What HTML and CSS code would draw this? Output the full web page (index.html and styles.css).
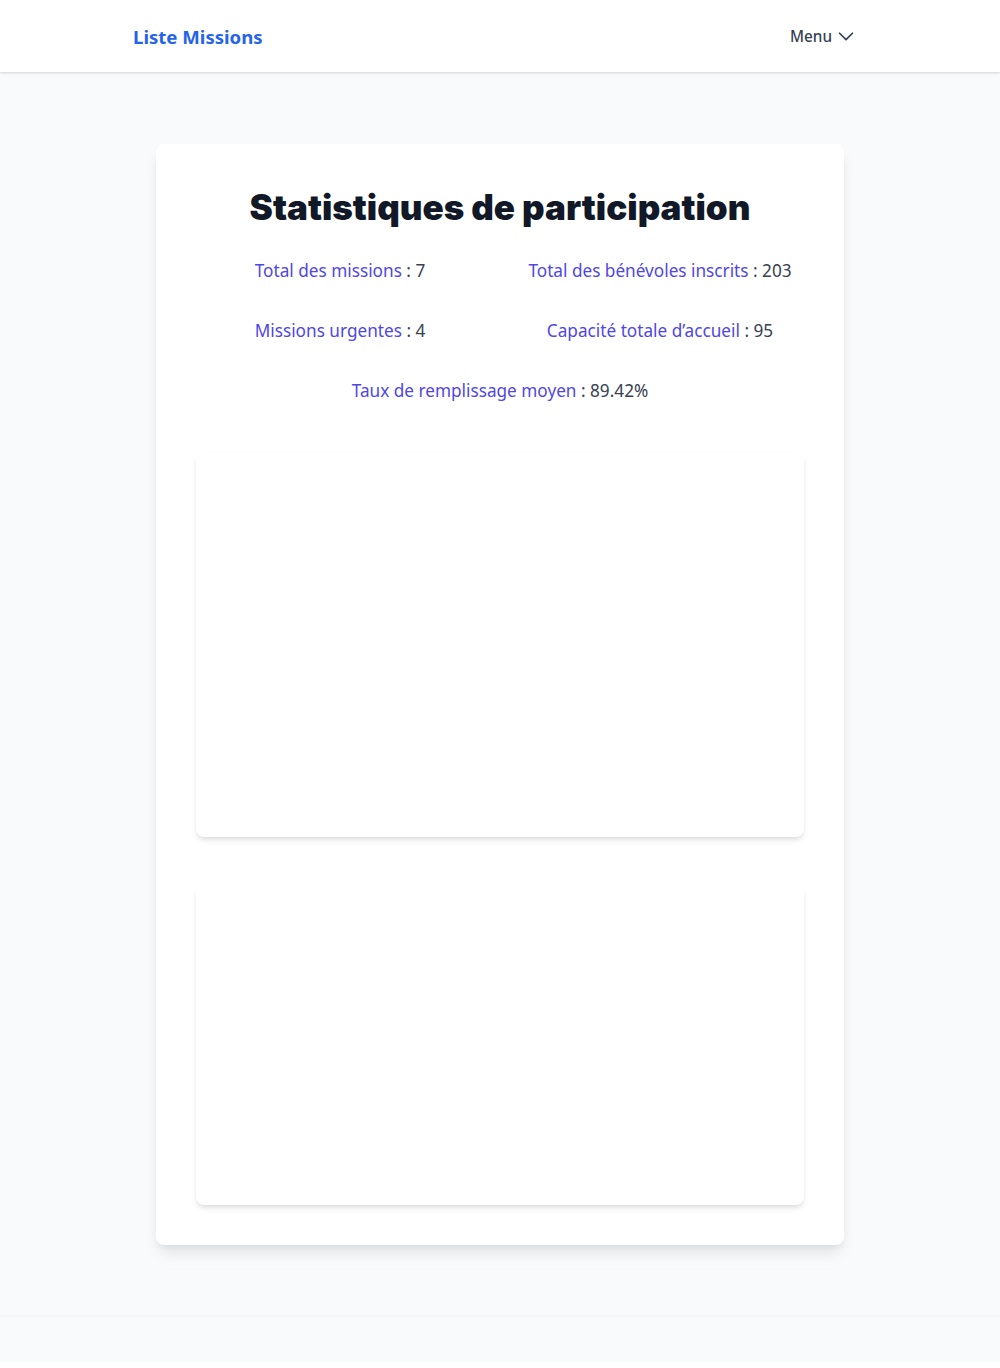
FILE: index.html
```html
<!DOCTYPE html>
<html lang="fr">
<head>
<meta charset="utf-8">
<title>Statistiques</title>
<link rel="stylesheet" href="styles.css">
</head>
<body>
<div class="page">
  <header class="topbar">
    <div class="topbar-inner">
      <a class="brand" href="#">Liste Missions</a>
      <button class="menu-btn">Menu
        <svg class="chev" width="22" height="22" viewBox="0 0 24 24" fill="none" stroke="currentColor" stroke-width="1.9" stroke-linecap="round" stroke-linejoin="round"><path d="M19 9l-7 7-7-7"/></svg>
      </button>
    </div>
  </header>
  <main class="main">
    <section class="card">
      <h1 class="title">Statistiques de participation</h1>
      <div class="stats">
        <p class="stat"><span class="label">Total des missions</span> : 7</p>
        <p class="stat"><span class="label">Total des bénévoles inscrits</span> : 203</p>
        <p class="stat"><span class="label">Missions urgentes</span> : 4</p>
        <p class="stat"><span class="label">Capacité totale d’accueil</span> : 95</p>
        <p class="stat wide"><span class="label">Taux de remplissage moyen</span> : 89.42%</p>
      </div>
      <div class="chart chart-a"></div>
      <div class="chart chart-b"></div>
    </section>
  </main>
  <footer class="footer"></footer>
</div>
</body>
</html>
```
FILE: styles.css
```css
* { box-sizing: border-box; }
html, body { margin: 0; padding: 0; background: #fff; }
body {
  font-family: "Noto Sans", "Open Sans", sans-serif;
  color: #374151;
}
.page {
  background: #f9fafb;
}
.topbar {
  background: #fff;
  height: 72px;
  box-shadow: 0 1px 3px rgba(0,0,0,0.1), 0 1px 2px rgba(0,0,0,0.06);
  position: relative;
}
.topbar-inner {
  height: 72px;
  padding: 0 143px 0 133px;
  display: flex;
  align-items: center;
  justify-content: space-between;
}
.brand {
  color: #2563eb;
  font-weight: 700;
  font-size: 18.6px;
  text-decoration: none;
}
.menu-btn {
  background: none;
  border: 0;
  padding: 0;
  display: flex;
  align-items: center;
  gap: 3px;
  font-family: inherit;
  font-size: 15.3px;
  font-weight: 500;
  color: #374151;
}
.main {
  padding: 72px 0 72px;
}
.card {
  width: 688px;
  margin: 0 auto;
  background: #fff;
  border-radius: 8px;
  padding: 40px;
  box-shadow: 0 10px 15px -3px rgba(0,0,0,0.1), 0 4px 6px -2px rgba(0,0,0,0.05);
}
.title {
  margin: 3px 0 0;
  text-align: center;
  font-family: "Inter", sans-serif;
  font-weight: 900;
  font-size: 35px;
  line-height: 40px;
  color: #111827;
}
.stats {
  margin: 30px -16px 0;
  display: grid;
  grid-template-columns: 1fr 1fr;
  row-gap: 32px;
}
.stat {
  margin: 0;
  text-align: center;
  font-size: 17.2px;
  line-height: 28px;
  color: #374151;
}
.stat.wide { grid-column: 1 / -1; }
.label { color: #4f46e5; }
.chart {
  background: #fff;
  border-radius: 8px;
  box-shadow: 0 4px 6px -1px rgba(0,0,0,0.1), 0 2px 4px -1px rgba(0,0,0,0.06);
}
.chart-a { margin-top: 47px; height: 385px; }
.chart-b { margin-top: 49px; height: 319px; }
.footer {
  height: 45px;
  background: #f9fafb;
  box-shadow: 0 0 3px rgba(0,0,0,0.08);
  position: relative;
}
```
